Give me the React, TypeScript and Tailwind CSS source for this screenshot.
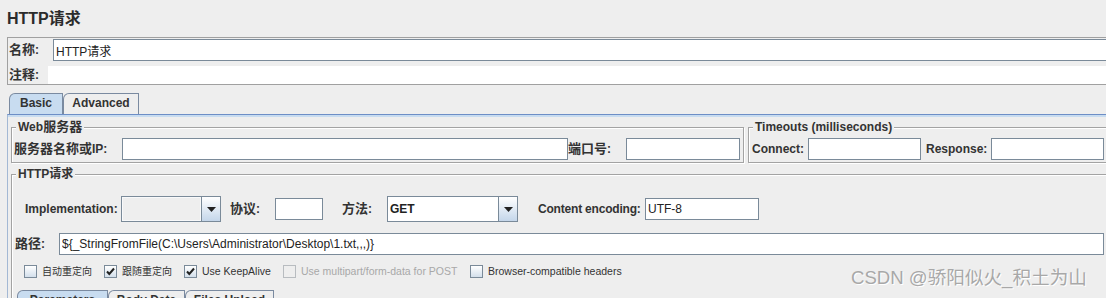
import React from 'react';

function Label({ children, className = '' }: { children: React.ReactNode; className?: string }) {
  return (
    <span className={`shrink-0 whitespace-nowrap text-[12px] font-bold leading-[16px] text-[#333] ${className}`}>
      {children}
    </span>
  );
}

function Field({ className = '', value = '' }: { className?: string; value?: string }) {
  return (
    <input
      readOnly
      defaultValue={value}
      className={`h-[22px] shrink-0 border border-[#7a8a99] bg-white pl-[2px] text-[12px] text-[#222] outline-none ${className}`}
    />
  );
}

function Combo({ className = '', value = '', fill = 'bg-white' }: { className?: string; value?: string; fill?: string }) {
  return (
    <div className={`flex h-[26px] shrink-0 border border-[#7a8a99] ${className}`}>
      <div className={`flex flex-1 items-center pl-[2px] text-[12px] font-bold text-[#222] ${fill}`}>{value}</div>
      <div className="flex w-[19px] items-center justify-center border-l border-[#7a8a99] bg-linear-to-b from-white to-[#c4d6ea]">
        <svg width="9" height="5" viewBox="0 0 9 5">
          <path d="M0 0h9L4.5 5z" fill="#222" />
        </svg>
      </div>
    </div>
  );
}

function Check({
  label,
  checked = false,
  disabled = false,
  className = '',
}: {
  label: React.ReactNode;
  checked?: boolean;
  disabled?: boolean;
  className?: string;
}) {
  return (
    <div className={`flex shrink-0 items-center ${className}`}>
      <div
        className={`flex h-[13px] w-[13px] items-center justify-center border ${
          disabled ? 'border-[#b8bcc0] bg-[#eeeeee]' : 'border-[#7a8a99] bg-linear-to-b from-white to-[#d3dfeb]'
        }`}
      >
        {checked && (
          <svg width="11" height="11" viewBox="0 0 11 11">
            <path d="M2 5.5L4.3 8L9 2.5" fill="none" stroke="#222" strokeWidth="2" />
          </svg>
        )}
      </div>
      <span className={`ml-[5px] whitespace-nowrap text-[10.5px] ${disabled ? 'text-[#a8a8a8]' : 'text-[#333]'}`}>
        {label}
      </span>
    </div>
  );
}

function Tab({ label, active = false, className = '' }: { label: string; active?: boolean; className?: string }) {
  return (
    <div
      className={`flex h-[21px] shrink-0 justify-center rounded-tl-[6px] border border-b-0 border-[#7a8aa0] pt-[2px] text-[12px] font-bold leading-[14px] text-[#333] ${
        active ? 'bg-[#c8dcf0]' : 'bg-[#eeeeee]'
      } ${className}`}
    >
      {label}
    </div>
  );
}

export default function App() {
  return (
    <div className="relative h-[298px] w-[1106px] overflow-hidden bg-[#eeeeee] font-['Liberation_Sans','Noto_Sans_CJK_SC',sans-serif] text-[#333]">
      {/* Title */}
      <div className="h-[37px] pl-[7px] pt-[9px] text-[16px] font-bold leading-[20px] text-[#2b2b2b]">HTTP请求</div>

      {/* Name / comment */}
      <div className="ml-[7px] w-[1110px] border border-[#a0a0a0]">
        <div className="mt-[1px] flex items-center">
          <Label className="w-[45px] pl-[1px]">
            <span className="text-[13px]">名称</span>:
          </Label>
          <Field className="w-[1070px] pl-[1px]" value="HTTP请求" />
        </div>
        <div className="mt-[5px] flex h-[18px] items-center">
          <Label className="w-[40px] pl-[1px]">
            <span className="text-[13px]">注释</span>:
          </Label>
          <div className="h-[18px] flex-1 bg-white" />
        </div>
      </div>

      {/* Tabs */}
      <div className="mt-[8px] flex pl-[9px]">
        <Tab label="Basic" active className="w-[54px]" />
        <Tab label="Advanced" className="w-[76px]" />
      </div>

      {/* Tab content */}
      <div className="ml-[7px] w-[1110px] border-l border-t border-l-[#a3b8d4] border-t-[#6d8ec6]">
        <div className="h-[2px] bg-[#c8dcf0]" />

        <div className="mt-[3px] flex items-start pl-[3px]">
          <fieldset className="w-[733px] shrink-0 border border-[#a3a3a3] pb-[2px] shadow-[inset_1px_1px_0_#fff,1px_1px_0_#fff]">
            <legend className="ml-[4px] bg-[#eeeeee] px-[2px] text-[12px] font-bold leading-[14px]">
              Web<span className="text-[13px]">服务器</span>
            </legend>
            <div className="mt-[4px] flex items-center pl-[2px]">
              <Label className="w-[108px]">
                <span className="text-[13px]">服务器名称或</span>IP:
              </Label>
              <Field className="w-[446px]" />
              <Label className="w-[58px]">
                <span className="text-[13px]">端口号</span>:
              </Label>
              <Field className="w-[114px]" />
            </div>
          </fieldset>

          <fieldset className="ml-[4px] w-[370px] shrink-0 border border-[#a3a3a3] pb-[2px] shadow-[inset_1px_1px_0_#fff,1px_1px_0_#fff]">
            <legend className="ml-[4px] bg-[#eeeeee] px-[2px] text-[12px] font-bold leading-[14px]">
              Timeouts (milliseconds)
            </legend>
            <div className="mt-[4px] flex items-center pl-[3px]">
              <Label className="w-[56px]">Connect:</Label>
              <Field className="w-[113px]" />
              <Label className="w-[70px] pl-[5px]">Response:</Label>
              <Field className="w-[113px]" />
            </div>
          </fieldset>
        </div>

        {/* HTTP request */}
        <fieldset className="ml-[3px] mt-[4px] w-[1110px] border border-[#a3a3a3] pb-[20px] shadow-[inset_1px_1px_0_#fff]">
          <legend className="ml-[4px] bg-[#eeeeee] px-[2px] text-[12px] font-bold leading-[14px]">HTTP请求</legend>

          <div className="mt-[15px] flex h-[26px] items-center pl-[13px]">
            <Label className="w-[96px]">Implementation:</Label>
            <Combo className="w-[100px]" fill="bg-[#eeeeee] shadow-[inset_0_0_0_1px_#f8f9fa]" />
            <Label className="w-[54px] pl-[9px]">
              <span className="text-[13px]">协议</span>:
            </Label>
            <Field className="w-[48px]" />
            <Label className="w-[64px] pl-[19px]">
              <span className="text-[13px]">方法</span>:
            </Label>
            <Combo className="w-[131px]" value="GET" />
            <Label className="w-[127px] pl-[20px] tracking-[-0.2px]">Content encoding:</Label>
            <Field className="w-[114px]" value="UTF-8" />
          </div>

          <div className="mt-[11px] flex items-center pl-[3px]">
            <Label className="w-[44px]">
              <span className="text-[13px]">路径</span>:
            </Label>
            <Field className="w-[1045px]" value="${_StringFromFile(C:\Users\Administrator\Desktop\1.txt,,,)}" />
          </div>

          <div className="mt-[10px] flex h-[13px] items-center pl-[12px]">
            <Check className="w-[80px]" label={<span className="text-[10px]">自动重定向</span>} />
            <Check className="w-[80px]" checked label={<span className="text-[10px]">跟随重定向</span>} />
            <Check className="w-[99px]" checked label="Use KeepAlive" />
            <Check className="w-[187px]" disabled label="Use multipart/form-data for POST" />
            <Check label="Browser-compatible headers" />
          </div>

          <div className="mt-[12px] flex pl-[5px]">
            <Tab label="Parameters" active className="w-[91px]" />
            <Tab label="Body Data" className="w-[77px]" />
            <Tab label="Files Upload" className="w-[89px]" />
          </div>
        </fieldset>
      </div>

      {/* Watermark */}
      <div className="pointer-events-none absolute left-[851px] top-[268px] whitespace-nowrap text-[18.6px] leading-[20px] text-[#a8a8a8] [text-shadow:1px_1px_0_#ffffff]">
        CSDN @骄阳似火_积土为山
      </div>
    </div>
  );
}
